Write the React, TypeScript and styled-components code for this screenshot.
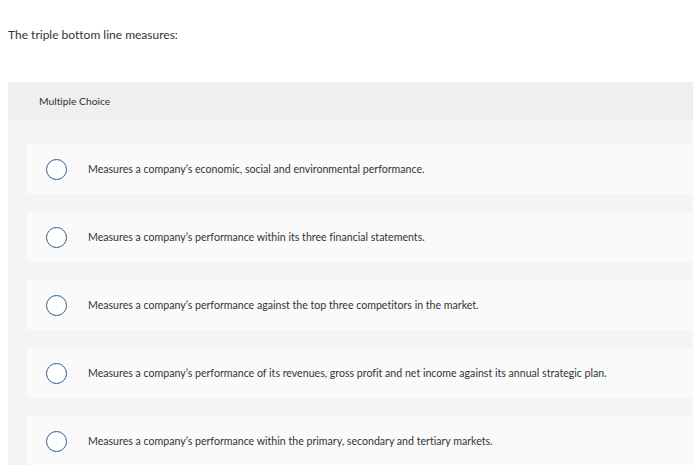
import React from "react";
import styled, { createGlobalStyle } from "styled-components";

const Global = createGlobalStyle`
  html, body { margin: 0; padding: 0; background: #ffffff; overflow: hidden; }
  body {
    font-family: Lato, "Open Sans", sans-serif;
    color: #333333;
    font-variant-ligatures: none;
  }
`;

const Page = styled.div`
  width: 693px;
  height: 465px;
  overflow: hidden;
  padding-left: 8px;
  box-sizing: border-box;
  display: flex;
  flex-direction: column;
`;

const Question = styled.p`
  margin: 0;
  padding-top: 28px;
  height: 82px;
  box-sizing: border-box;
  font-size: 12px;
  line-height: 14px;
  color: #333333;
  flex: none;
`;

const Panel = styled.section`
  background: #f4f4f4;
  width: 700px;
  flex: 1;
`;

const Header = styled.div`
  height: 38px;
  background: #efefef;
  display: flex;
  align-items: center;
  padding-left: 31px;
  font-size: 10.3px;
  color: #333333;
`;

const List = styled.div`
  display: flex;
  flex-direction: column;
  gap: 18px;
  padding: 24px 0 0 19px;
`;

const Option = styled.label`
  height: 50px;
  background: #fafafa;
  display: flex;
  align-items: center;
  padding-left: 19px;
  font-size: 10.6px;
  color: #333333;
  cursor: pointer;
`;

const Radio = styled.span`
  width: 19px;
  height: 19px;
  border-radius: 50%;
  border: 1.5px solid #2d5b8c;
  background: #ffffff;
  flex: none;
  margin-right: 21px;
`;

const choices = [
  "Measures a company\u2019s economic, social and environmental performance.",
  "Measures a company\u2019s performance within its three financial statements.",
  "Measures a company\u2019s performance against the top three competitors in the market.",
  "Measures a company\u2019s performance of its revenues, gross profit and net income against its annual strategic plan.",
  "Measures a company\u2019s performance within the primary, secondary and tertiary markets.",
];

export default function App() {
  return (
    <Page>
      <Global />
      <Question>The triple bottom line measures:</Question>
      <Panel>
        <Header>Multiple Choice</Header>
        <List>
          {choices.map((c) => (
            <Option key={c}>
              <Radio />
              {c}
            </Option>
          ))}
        </List>
      </Panel>
    </Page>
  );
}
